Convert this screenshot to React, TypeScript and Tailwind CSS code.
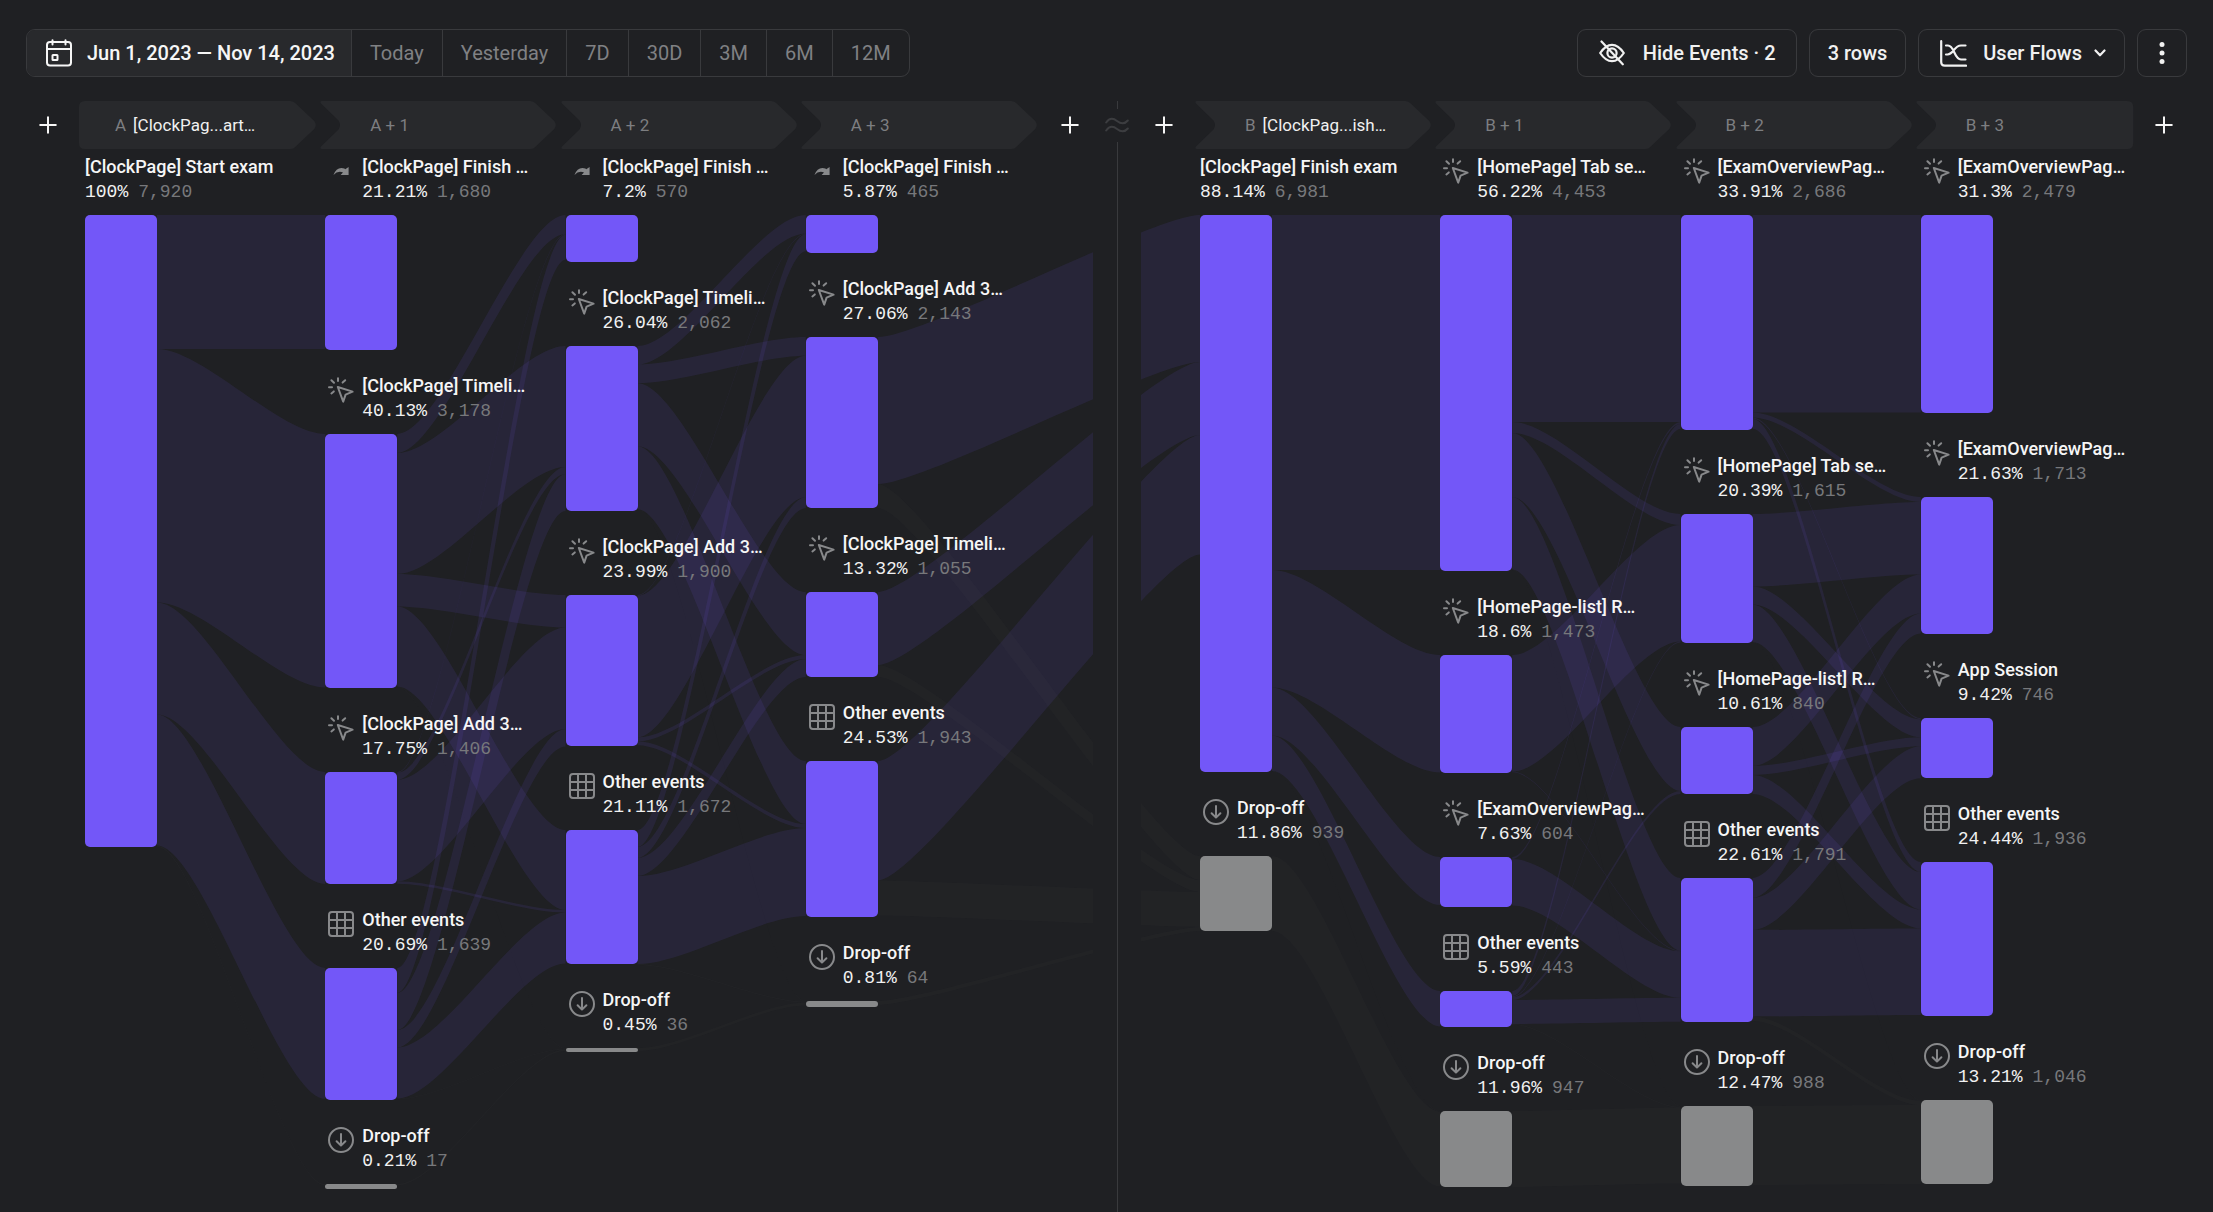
import type { ReactNode } from "react";

type Kind = "anchor" | "convert" | "event" | "other" | "drop";

interface FlowNode {
  kind: Kind;
  title: string;
  percent: string;
  count: string;
  height: number;
}

type Link = [source: number, target: number, size: number];

interface Column {
  step: string;
  event?: string;
  nodes: FlowNode[];
}

const node = (kind: Kind, title: string, percent: string, count: string, height: number): FlowNode => ({
  kind,
  title,
  percent,
  count,
  height,
});

const columnsA: Column[] = [
  {
    step: "A",
    event: "[ClockPag...art…",
    nodes: [node("anchor", "[ClockPage] Start exam", "100%", "7,920", 632)],
  },
  {
    step: "A + 1",
    nodes: [
      node("convert", "[ClockPage] Finish …", "21.21%", "1,680", 135),
      node("event", "[ClockPage] Timeli…", "40.13%", "3,178", 254),
      node("event", "[ClockPage] Add 3…", "17.75%", "1,406", 112),
      node("other", "Other events", "20.69%", "1,639", 132),
      node("drop", "Drop-off", "0.21%", "17", 5),
    ],
  },
  {
    step: "A + 2",
    nodes: [
      node("convert", "[ClockPage] Finish …", "7.2%", "570", 47),
      node("event", "[ClockPage] Timeli…", "26.04%", "2,062", 165),
      node("event", "[ClockPage] Add 3…", "23.99%", "1,900", 151),
      node("other", "Other events", "21.11%", "1,672", 134),
      node("drop", "Drop-off", "0.45%", "36", 4),
    ],
  },
  {
    step: "A + 3",
    nodes: [
      node("convert", "[ClockPage] Finish …", "5.87%", "465", 38),
      node("event", "[ClockPage] Add 3…", "27.06%", "2,143", 171),
      node("event", "[ClockPage] Timeli…", "13.32%", "1,055", 85),
      node("other", "Other events", "24.53%", "1,943", 156),
      node("drop", "Drop-off", "0.81%", "64", 6),
    ],
  },
];

const columnsB: Column[] = [
  {
    step: "B",
    event: "[ClockPag...ish…",
    nodes: [
      node("anchor", "[ClockPage] Finish exam", "88.14%", "6,981", 557),
      node("drop", "Drop-off", "11.86%", "939", 75),
    ],
  },
  {
    step: "B + 1",
    nodes: [
      node("event", "[HomePage] Tab se…", "56.22%", "4,453", 356),
      node("event", "[HomePage-list] R…", "18.6%", "1,473", 118),
      node("event", "[ExamOverviewPag…", "7.63%", "604", 50),
      node("other", "Other events", "5.59%", "443", 36),
      node("drop", "Drop-off", "11.96%", "947", 76),
    ],
  },
  {
    step: "B + 2",
    nodes: [
      node("event", "[ExamOverviewPag…", "33.91%", "2,686", 215),
      node("event", "[HomePage] Tab se…", "20.39%", "1,615", 129),
      node("event", "[HomePage-list] R…", "10.61%", "840", 67),
      node("other", "Other events", "22.61%", "1,791", 144),
      node("drop", "Drop-off", "12.47%", "988", 80),
    ],
  },
  {
    step: "B + 3",
    nodes: [
      node("event", "[ExamOverviewPag…", "31.3%", "2,479", 198),
      node("event", "[ExamOverviewPag…", "21.63%", "1,713", 137),
      node("event", "App Session", "9.42%", "746", 60),
      node("other", "Other events", "24.44%", "1,936", 154),
      node("drop", "Drop-off", "13.21%", "1,046", 84),
    ],
  },
];

/* Links between neighbouring columns, ordered by source and then by target. */
const linksA: Link[][] = [
  [[0, 0, 134], [0, 1, 253.5], [0, 2, 112], [0, 3, 131], [0, 4, 1.4]],
  [
    [1, 0, 19], [1, 1, 121], [1, 2, 32.5], [1, 3, 80], [1, 4, 0.8],
    [2, 0, 0.8], [2, 1, 7], [2, 2, 101.5], [2, 3, 2.5],
    [3, 0, 25], [3, 1, 37], [3, 2, 17.5], [3, 3, 51], [3, 4, 0.8],
    [4, 4, 1.4],
  ],
  [
    [1, 0, 18.5], [1, 1, 18.7], [1, 2, 63], [1, 3, 63], [1, 4, 0.6],
    [2, 0, 0.8], [2, 1, 141.5], [2, 2, 4], [2, 3, 4],
    [3, 0, 17], [3, 1, 11], [3, 2, 18], [3, 3, 88], [3, 4, 1],
    [4, 4, 3],
  ],
];

const linksAcross: Link[] = [
  [1, 0, 147], [1, 1, 24],
  [2, 0, 73], [2, 1, 12],
  [3, 0, 119.5], [3, 1, 35],
  [4, 1, 4],
];

const linksB: Link[][] = [
  [[0, 0, 355], [0, 1, 117.5], [0, 2, 48], [0, 3, 35.5], [0, 4, 0.6], [1, 4, 75]],
  [
    [0, 0, 207], [0, 1, 11], [0, 2, 64], [0, 3, 72.5], [0, 4, 0.8],
    [1, 1, 116.5], [1, 3, 0.8],
    [2, 0, 2], [2, 3, 46.5],
    [3, 0, 5], [3, 1, 1], [3, 2, 3], [3, 3, 24], [3, 4, 0.8],
    [4, 4, 76],
  ],
  [
    [0, 0, 197.5], [0, 1, 5], [0, 2, 1.2], [0, 3, 10],
    [1, 1, 72.5], [1, 2, 18], [1, 3, 37.5], [1, 4, 0.6],
    [2, 1, 39], [2, 2, 9], [2, 3, 19],
    [3, 1, 20], [3, 2, 32], [3, 3, 86.5], [3, 4, 4.5],
    [4, 4, 79],
  ],
];

const COLUMN = 240.25;
const BAR_START = 6;
const BAR_END = 78;
const FIRST_TOP = 66;
const LABEL_SPACE = 84;
const BEND = 45;
const ACROSS = 322;

function nodeTops(column: Column): number[] {
  let y = FIRST_TOP;
  return column.nodes.map((n) => {
    const top = y;
    y += n.height + LABEL_SPACE;
    return top;
  });
}

interface Ribbon {
  d: string;
  drop: boolean;
}

function ribbons(links: Link[], from: Column, to: Column, x0: number, x1: number): Ribbon[] {
  const out = nodeTops(from);
  const into = nodeTops(to);
  const c0 = x0 + BEND;
  const c1 = x1 - BEND;
  return links.map(([s, t, size]) => {
    const a = out[s];
    const b = into[t];
    out[s] += size;
    into[t] += size;
    return {
      d: `M${x0} ${a}C${c0} ${a} ${c1} ${b} ${x1} ${b}V${b + size}C${c1} ${b + size} ${c0} ${a + size} ${x0} ${a + size}Z`,
      drop: to.nodes[t].kind === "drop",
    };
  });
}

function innerRibbons(columns: Column[], links: Link[][]): Ribbon[] {
  return links.flatMap((group, i) =>
    ribbons(group, columns[i], columns[i + 1], i * COLUMN + BAR_END, (i + 1) * COLUMN + BAR_START),
  );
}

const lastBarEnd = 3 * COLUMN + BAR_END;

const ribbonsA = [
  ...innerRibbons(columnsA, linksA),
  ...ribbons(linksAcross, columnsA[3], columnsB[0], lastBarEnd, lastBarEnd + ACROSS),
];

const ribbonsB = [
  ...ribbons(linksAcross, columnsA[3], columnsB[0], BAR_START - ACROSS, BAR_START),
  ...innerRibbons(columnsB, linksB),
];

function PlusIcon() {
  return (
    <svg viewBox="0 0 18 18" className="size-[18px]" fill="none" stroke="currentColor" strokeWidth="2" strokeLinecap="round" aria-hidden="true">
      <path d="M9 1.2V16.8M1.2 9H16.8" />
    </svg>
  );
}

function NodeIcon({ kind }: { kind: Kind }) {
  if (kind === "anchor") return null;
  return (
    <svg
      viewBox="0 0 26 26"
      className="mt-[3px] mr-2 ml-[3px] size-[26px] shrink-0 text-[#88898b]"
      fill="none"
      stroke="currentColor"
      strokeWidth="2"
      strokeLinecap="round"
      strokeLinejoin="round"
      aria-hidden="true"
    >
      {kind === "convert" && (
        <path
          d="M5.5 17Q8.6 8.2 16.4 10.4L17.2 11.2L20.6 9V17H12.6L15 14.4Q9.600 12.4 5.5 17Z"
          fill="currentColor"
          stroke="none"
        />
      )}
      {kind === "event" && (
        <>
          <path d="M9.8 10L24.6 14.6L17.6 17.6L15.2 24.6Z" />
          <path d="M10 1.2V4M14.6 5.6L17.2 3.2M3.4 3.2L6 5.8M1 10.2H4M3.4 16.4L5.8 14.4" />
        </>
      )}
      {kind === "other" && (
        <>
          <rect x="1" y="1" width="24" height="24" rx="3" />
          <path d="M9 1V25M17 1V25M1 9H25M1 17H25" />
        </>
      )}
      {kind === "drop" && (
        <>
          <circle cx="13" cy="13" r="12" />
          <path d="M13 7V18.4M8.6 14.2L13 18.6L17.4 14.2" />
        </>
      )}
    </svg>
  );
}

function StepHeader({ column, first, last }: { column: Column; first: boolean; last: boolean }) {
  const left = first
    ? "M0 6Q0 0 6 0"
    : "M3 48Q0.5 48 2 45.5L19.5 28.5Q22.5 24 19.5 19.5L2 2.5Q0.5 0 3 0";
  const right = last
    ? "H212Q218 0 218 6V42Q218 48 212 48"
    : "H211Q214.5 0 216.5 2.5L235 20Q238 24 235 28L216.5 45.5Q214.5 48 211 48";
  const close = first ? "H6Q0 48 0 42Z" : "H3Z";
  return (
    <li className="relative flex h-12 items-center">
      <svg viewBox="0 0 240 48" preserveAspectRatio="none" className="absolute inset-0 size-full" aria-hidden="true">
        <path d={left + right + close} fill="#28292c" />
      </svg>
      <span className={`relative flex gap-[7px] text-[17px] leading-6 whitespace-nowrap ${first ? "pl-9" : "pl-[51px]"}`}>
        <span className="text-[#7d7e81]">{column.step}</span>
        {column.event && <span className="text-[#f1f1f1]">{column.event}</span>}
      </span>
    </li>
  );
}

function NodeCard({ item }: { item: FlowNode }) {
  return (
    <li className="flex flex-col">
      <div className="flex h-[60px] whitespace-nowrap">
        <NodeIcon kind={item.kind} />
        <div className="flex flex-col">
          <h3 className="text-lg leading-6 font-medium text-[#f6f6f6]">{item.title}</h3>
          <p className="flex gap-2.5 font-['Liberation_Mono',monospace] text-lg leading-[26px] text-[#f1f1f1]">
            <span>{item.percent}</span>
            <span className="text-[#77787b]">{item.count}</span>
          </p>
        </div>
      </div>
      <div
        className={`w-18 rounded-[5px] ${item.kind === "drop" ? "bg-[#88898a]" : "bg-[#7357f8]"}`}
        style={{ height: item.height }}
      />
    </li>
  );
}

function Pane({
  id,
  label,
  columns,
  flows,
  clipX,
  closed,
}: {
  id: string;
  label: string;
  columns: Column[];
  flows: Ribbon[];
  clipX: number;
  closed: boolean;
}) {
  return (
    <section aria-label={label} className="min-w-0 flex-1">
      <ol className="grid grid-cols-4">
        {columns.map((column, i) => (
          <StepHeader
            key={column.step}
            column={column}
            first={id === "a" && i === 0}
            last={closed && i === columns.length - 1}
          />
        ))}
      </ol>
      <div className="relative">
        <svg
          viewBox="0 0 961 1050"
          preserveAspectRatio="none"
          className="absolute inset-x-0 top-0 h-[1050px] w-full overflow-visible"
          aria-hidden="true"
        >
          <clipPath id={`clip-${id}`}>
            <rect x={clipX} y="0" width={1014} height="1050" />
          </clipPath>
          <g clipPath={`url(#clip-${id})`}>
            {flows.map((flow, i) => (
              <path key={i} d={flow.d} fill={flow.drop ? "#88898a" : "#7357f8"} fillOpacity={flow.drop ? 0.03 : 0.1} />
            ))}
          </g>
        </svg>
        <div className="relative grid grid-cols-4 pt-1.5">
          {columns.map((column) => (
            <ul key={column.step} className="flex min-w-0 flex-col gap-6 pl-1.5">
              {column.nodes.map((item, i) => (
                <NodeCard key={i} item={item} />
              ))}
            </ul>
          ))}
        </div>
      </div>
    </section>
  );
}

function ToolButton({ label, children, className }: { label?: string; children: ReactNode; className: string }) {
  return (
    <button
      type="button"
      aria-label={label}
      className={`flex h-12 items-center rounded-[9px] border border-[#393a3d] font-medium text-[#f1f1f1] ${className}`}
    >
      {children}
    </button>
  );
}

const ranges = ["Today", "Yesterday", "7D", "30D", "3M", "6M", "12M"];

export default function App() {
  return (
    <div className="flex min-h-screen flex-col bg-[#1f2023] font-[Roboto,sans-serif] text-xl">
      <header className="flex items-center justify-between px-[26px] pt-[29px] pb-6 whitespace-nowrap">
        <div className="flex h-12 overflow-hidden rounded-[9px] border border-[#393a3d]">
          <button type="button" className="flex items-center gap-3.5 bg-[#28292c] pr-4 pl-[18px] font-medium text-[#f6f6f6]">
            <svg viewBox="0 0 28 28" className="size-7" fill="none" stroke="currentColor" strokeWidth="2" strokeLinecap="round" aria-hidden="true">
              <rect x="2" y="3" width="24" height="23.5" rx="3" />
              <path d="M2 10H26M7.5 1.2V5.5M20.5 1.2V5.5" />
              <rect x="7.5" y="16" width="5" height="5" rx="0.5" />
            </svg>
            Jun 1, 2023 — Nov 14, 2023
          </button>
          {ranges.map((range) => (
            <button key={range} type="button" className="border-l border-[#393a3d] px-[18px] text-[#808184]">
              {range}
            </button>
          ))}
        </div>
        <div className="flex gap-3">
          <ToolButton className="gap-[18px] pr-5 pl-[21px]">
            <svg viewBox="0 0 26 26" className="size-[26px]" fill="none" stroke="currentColor" strokeWidth="2.2" strokeLinecap="round" strokeLinejoin="round" aria-hidden="true">
              <path d="M1.2 13C3.5 9.5 7 4.8 13 4.8S22.5 9.5 24.8 13C22.5 16.5 19 21.2 13 21.2S3.5 16.5 1.2 13Z" />
              <circle cx="13" cy="13" r="4.6" />
              <path d="M2.5 1.5L23.8 24.3" />
            </svg>
            Hide Events · 2
          </ToolButton>
          <ToolButton className="px-[18px]">3 rows</ToolButton>
          <ToolButton className="pr-[18px] pl-[21px]">
            <svg viewBox="0 0 27 27" className="mr-4 size-[27px]" fill="none" stroke="currentColor" strokeWidth="2.2" strokeLinecap="round" aria-hidden="true">
              <path d="M1.2 1.2V22Q1.2 25.6 4.8 25.6H26" />
              <path d="M6 5.5H8C14.5 5.5 14 19.5 21 19.5H25.5M6 14.5H7.5C13.5 14.5 14 5.5 21 5.5H25.5" />
            </svg>
            User Flows
            <svg viewBox="0 0 12 8" className="ml-3 h-2 w-3" fill="none" stroke="currentColor" strokeWidth="2.2" strokeLinecap="round" strokeLinejoin="round" aria-hidden="true">
              <path d="M1.5 1.5L6 6.3L10.5 1.5" />
            </svg>
          </ToolButton>
          <ToolButton label="More options" className="w-[50px] justify-center">
            <svg viewBox="0 0 6 24" className="h-6 w-1.5" fill="currentColor" aria-hidden="true">
              <circle cx="3" cy="3.5" r="2.5" />
              <circle cx="3" cy="12" r="2.5" />
              <circle cx="3" cy="20.5" r="2.5" />
            </svg>
          </ToolButton>
        </div>
      </header>

      <main className="flex flex-1">
        <div className="w-[79px] shrink-0 text-[#f6f6f6]">
          <button type="button" aria-label="Add step before A" className="flex h-12 w-full items-center justify-center pl-[17px]">
            <PlusIcon />
          </button>
        </div>

        <Pane id="a" label="Flow from A" columns={columnsA} flows={ribbonsA} clipX={0} closed={false} />

        <div className="flex w-[154px] shrink-0 justify-between text-[#f6f6f6]">
          <button type="button" aria-label="Add step after A" className="flex h-12 w-[60px] items-center justify-center">
            <PlusIcon />
          </button>
          <div className="flex flex-col items-center">
            <div className="h-2 w-px bg-[#393a3d]" />
            <svg viewBox="0 0 24 16" className="my-2 h-[17px] w-6 text-[#3c3d40]" fill="none" stroke="currentColor" strokeWidth="2" strokeLinecap="round" aria-hidden="true">
              <path d="M1.2 5C5 0 8.5 0.8 12 3.5S19 7.5 22.8 3M1.2 13C5 8 8.5 8.8 12 11.5S19 15.5 22.8 11" />
            </svg>
            <div className="w-px flex-1 bg-[#393a3d]" />
          </div>
          <button type="button" aria-label="Add step before B" className="flex h-12 w-[60px] items-center justify-center">
            <PlusIcon />
          </button>
        </div>

        <Pane id="b" label="Flow from B" columns={columnsB} flows={ribbonsB} clipX={-53} closed />

        <div className="w-[58px] shrink-0 text-[#f6f6f6]">
          <button type="button" aria-label="Add step after B" className="flex h-12 items-center">
            <PlusIcon />
          </button>
        </div>
      </main>
    </div>
  );
}
